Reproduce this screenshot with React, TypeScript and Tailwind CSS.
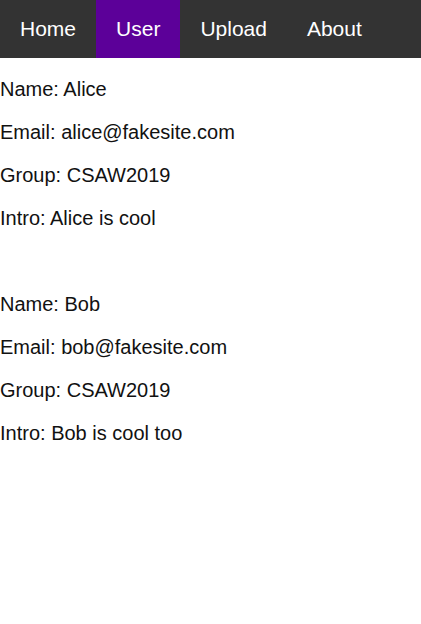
const users = [
  { name: "Alice", email: "alice@fakesite.com", group: "CSAW2019", intro: "Alice is cool" },
  { name: "Bob", email: "bob@fakesite.com", group: "CSAW2019", intro: "Bob is cool too" },
];

const links = ["Home", "User", "Upload", "About"];

export default function App() {
  return (
    <div className="min-h-screen bg-white text-[#111] text-[20px] leading-[23px] font-['Liberation_Sans',Arial,sans-serif]">
      <ul className="flex h-[58px] bg-[#333333]">
        {links.map((l) => (
          <li key={l}>
            <a
              href="#"
              className={
                "flex h-[58px] items-center px-5 pb-[2px] text-[21px] text-white " +
                (l === "User" ? "bg-[#5c0099]" : "")
              }
            >
              {l}
            </a>
          </li>
        ))}
      </ul>
      <div className="flex flex-col gap-[63px] pt-5">
        {users.map((u) => (
          <div key={u.name} className="flex flex-col gap-5">
            <p>Name: {u.name}</p>
            <p>Email: {u.email}</p>
            <p>Group: {u.group}</p>
            <p>Intro: {u.intro}</p>
          </div>
        ))}
      </div>
    </div>
  );
}
